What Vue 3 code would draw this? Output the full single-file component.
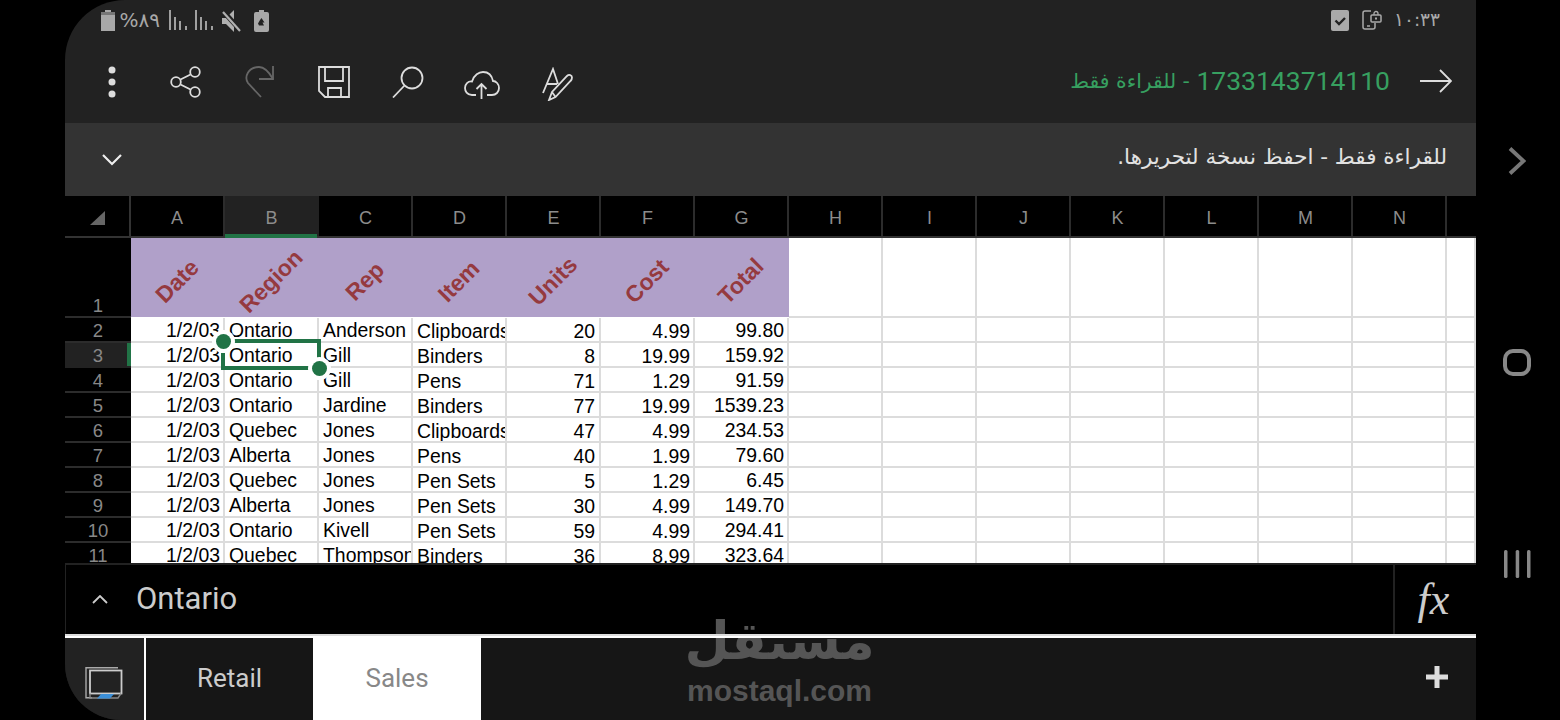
<script setup>
const cols = ['A','B','C','D','E','F','G','H','I','J','K','L','M','N']
const head = ['Date','Region','Rep','Item','Units','Cost','Total']
const rows = [
  ['1/2/03','Ontario','Anderson','Clipboards','20','4.99','99.80'],
  ['1/2/03','Ontario','Gill','Binders','8','19.99','159.92'],
  ['1/2/03','Ontario','Gill','Pens','71','1.29','91.59'],
  ['1/2/03','Ontario','Jardine','Binders','77','19.99','1539.23'],
  ['1/2/03','Quebec','Jones','Clipboards','47','4.99','234.53'],
  ['1/2/03','Alberta','Jones','Pens','40','1.99','79.60'],
  ['1/2/03','Quebec','Jones','Pen Sets','5','1.29','6.45'],
  ['1/2/03','Alberta','Jones','Pen Sets','30','4.99','149.70'],
  ['1/2/03','Ontario','Kivell','Pen Sets','59','4.99','294.41'],
  ['1/2/03','Quebec','Thompson','Binders','36','8.99','323.64'],
]
const empties = 8
</script>

<template>
  <div class="stage">
    <div class="screen">
      <header class="top">
        <div class="status">
          <div class="status-left">
            <svg class="st-batt" width="14" height="21" viewBox="0 0 14 21"><path d="M4 0h6v2h4v19H0V2h4z" fill="#a8a8a8"/><rect x="0" y="2" width="14" height="3" fill="#777"/></svg>
            <span class="pct" dir="rtl">٨٩%</span>
            <svg class="st-sig" width="18" height="20" viewBox="0 0 18 20"><path d="M0 0h2v20H0zM5 7h2v13H5zM10 11h2v9h-2zM16 16h2v4h-2z" fill="#a0a0a0"/></svg>
            <svg class="st-sig2" width="18" height="20" viewBox="0 0 18 20"><path d="M0 0h2v20H0zM5 7h2v13H5zM10 11h2v9h-2zM16 16h2v4h-2z" fill="#a0a0a0"/></svg>
            <svg class="st-mute" width="20" height="22" viewBox="0 0 20 22"><path d="M0 8h4l8-8v22l-8-8H0z" fill="#b0b0b0"/><path d="M1 1l18 20" stroke="#222" stroke-width="5"/><path d="M1 2l17 19" stroke="#b0b0b0" stroke-width="2.2"/></svg>
            <svg class="st-rec" width="15" height="22" viewBox="0 0 15 22"><path d="M5 0h5v2h3a2 2 0 0 1 2 2v16a2 2 0 0 1-2 2H2a2 2 0 0 1-2-2V4a2 2 0 0 1 2-2h3z" fill="#a8a8a8"/><path d="M7.500 8l3 4.500h-2l1.500 3H5l-1-2 2-3.500z" fill="#222"/></svg>
          </div>
          <div class="status-right">
            <svg class="st-check" width="18" height="21" viewBox="0 0 18 21"><rect width="18" height="21" rx="2" fill="#aaa"/><path d="M4.500 10.500l3.500 3.500 6-6" fill="none" stroke="#222" stroke-width="2.400"/></svg>
            <svg class="st-phone" width="20" height="20" viewBox="0 0 20 20"><path d="M9 1H3a2 2 0 0 0-2 2v14a2 2 0 0 0 2 2h8a2 2 0 0 0 2-2v-4" fill="none" stroke="#aaa" stroke-width="1.500"/><path d="M5 16h3" stroke="#aaa" stroke-width="1.500"/><rect x="9" y="5" width="10" height="7" rx="1" fill="none" stroke="#aaa" stroke-width="1.500"/><path d="M12 5V3.500a2 2 0 0 1 4 0V5" fill="none" stroke="#aaa" stroke-width="1.300"/><rect x="13" y="7.500" width="2" height="2" fill="#aaa"/></svg>
            <span class="time" dir="rtl">١٠:٣٣</span>
          </div>
        </div>
        <div class="toolbar">
          <div class="tools">
            <span class="tool"><svg width="8" height="32" viewBox="0 0 8 32"><circle cx="4" cy="4" r="3.500" fill="#ddd"/><circle cx="4" cy="16" r="3.500" fill="#ddd"/><circle cx="4" cy="28" r="3.500" fill="#ddd"/></svg></span>
            <span class="tool"><svg class="t-share" width="32" height="32" viewBox="0 0 32 32" fill="none" stroke="#ddd" stroke-width="1.800"><circle cx="6" cy="16" r="4.800"/><circle cx="25" cy="6" r="4.800"/><circle cx="25" cy="26" r="4.800"/><path d="M10.500 13.500L20.500 8.500M10.500 18.500L20.500 23.500"/></svg></span>
            <span class="tool"><svg width="30" height="32" viewBox="0 0 30 32" fill="none" stroke="#666" stroke-width="1.800"><path d="M16 31L3 17C-1 11 3 1 14 1C20 1 24 6 28 13"/><path d="M28 0V13H14"/></svg></span>
            <span class="tool"><svg class="t-save" width="32" height="32" viewBox="0 0 32 32" fill="none" stroke="#ddd" stroke-width="1.800"><path d="M1 1H31V31H7L1 25Z"/><path d="M7 1V15H25V1"/><path d="M10 31V22H23V31"/></svg></span>
            <span class="tool"><svg width="32" height="32" viewBox="0 0 32 32" fill="none" stroke="#ddd" stroke-width="1.800"><circle cx="20" cy="12" r="10.500"/><path d="M1 31.500L12.500 19.500"/></svg></span>
            <span class="tool"><svg class="t-cloud" width="36" height="28" viewBox="0 0 36 28" fill="none" stroke="#ddd" stroke-width="1.800"><path d="M12 24H8C3 24 1 20 1 17C1 13 4 10 8 10.500C10 4 15 1 19 1C25 1 28 5 29 10C32 10 35 13 35 17C35 21 32 24 28 24H23"/><path d="M17.500 28V13M12.500 18l5-5 5 5"/></svg></span>
            <span class="tool"><svg class="t-font" width="31" height="34" viewBox="0 0 31 34" fill="none" stroke="#ddd" stroke-width="1.800"><path d="M1 26L11 2L16 17M5 17H15"/><path d="M7 33L10 25L25 9C27 7 30 8 30 10.500C30 12 29.500 13 28.500 14L13.500 30ZM10 25L13.500 30"/></svg></span>
          </div>
          <div class="title-wrap">
            <span class="title" dir="rtl"><span class="title-num">1733143714110</span><span class="title-ar"> - للقراءة فقط</span></span>
            <svg width="32" height="24" viewBox="0 0 32 24" fill="none" stroke="#ddd" stroke-width="1.800"><path d="M0 12H31M20 1L31 12L20 23"/></svg>
          </div>
        </div>
      </header>

      <div class="notice">
        <svg width="20" height="12" viewBox="0 0 20 12" fill="none" stroke="#eee" stroke-width="2.200"><path d="M1 1l9 9 9-9"/></svg>
        <span class="notice-text" dir="rtl">للقراءة فقط - احفظ نسخة لتحريرها.</span>
      </div>

      <div class="col-head grid">
        <div class="corner"><svg width="15" height="14" viewBox="0 0 15 14"><path d="M15 0V14H0Z" fill="#666"/></svg></div>
        <div v-for="c in cols" :key="c" class="ch" :class="{ on: c === 'B' }">{{ c }}</div>
        <div class="ch last"></div>
      </div>

      <div class="sheet">
        <div class="grid r1">
          <div class="rh rh1">1</div>
          <div v-for="h in head" :key="h" class="hc"><span class="rot">{{ h }}</span></div>
          <div v-for="n in empties" :key="n" class="c"></div>
        </div>
        <div v-for="(r, i) in rows" :key="i" class="grid rw">
          <div class="rh" :class="{ on: i === 1 }">{{ i + 2 }}</div>
          <div class="c right">{{ r[0] }}</div>
          <div class="c">{{ r[1] }}</div>
          <div class="c">{{ r[2] }}</div>
          <div class="c low">{{ r[3] }}</div>
          <div class="c right low pad">{{ r[4] }}</div>
          <div class="c right low">{{ r[5] }}</div>
          <div class="c right">{{ r[6] }}</div>
          <div v-for="n in empties" :key="n" class="c"></div>
        </div>
        <div class="sel"></div>
        <div class="handle h-a"></div>
        <div class="handle h-b"></div>
      </div>

      <div class="formula">
        <svg class="f-chev" width="16" height="9" viewBox="0 0 16 9" fill="none" stroke="#ccc" stroke-width="1.800"><path d="M1 8l7-7 7 7"/></svg>
        <span class="f-val">Ontario</span>
        <div class="fx"><span>fx</span></div>
      </div>
      <div class="rule"></div>

      <div class="tabs">
        <div class="tab-ico">
          <svg width="38" height="32" viewBox="0 0 38 32" fill="none"><path d="M33 .7H1v30h6" stroke="#aaa" stroke-width="1.400"/><rect x="5" y="3.500" width="31.500" height="23" stroke="#ccc" stroke-width="1.800"/><path d="M5 26.500v4.500h28l3-4.500" stroke="#888" stroke-width="1.400"/><path d="M16 27h13l-4 4.500H12z" fill="#3b8fd8"/></svg>
        </div>
        <div class="tab">Retail</div>
        <div class="tab active">Sales</div>
        <div class="tab-rest">
          <svg width="22" height="22" viewBox="0 0 22 22"><path d="M8.500 0h5v8.500H22v5h-8.500V22h-5v-8.500H0v-5h8.500z" fill="#ddd"/></svg>
        </div>
      </div>

      <div class="mark">
        <span class="mark-ar" dir="rtl">مستقل</span>
        <span class="mark-en">mostaql.com</span>
      </div>
    </div>

    <nav class="nav">
      <svg width="18" height="28" viewBox="0 0 18 28" fill="none" stroke="#777" stroke-width="3.800"><path d="M2 1.500L15.500 14L2 26.500"/></svg>
      <div class="nav-home"></div>
      <svg width="27" height="28" viewBox="0 0 27 28"><rect x="0" width="3.500" height="28" rx="1.500" fill="#888"/><rect x="11.700" width="3.500" height="28" rx="1.500" fill="#888"/><rect x="23" width="3.500" height="28" rx="1.500" fill="#888"/></svg>
    </nav>
  </div>
</template>

<style>
html, body { margin: 0; background: #000; overflow: hidden; }
</style>

<style scoped>
.stage { width: 1560px; height: 720px; display: flex; background: #000; padding-left: 65px; box-sizing: border-box; }
.screen { position: relative; width: 1411px; height: 720px; flex: none; overflow: hidden; border-radius: 60px 0 0 56px; display: flex; flex-direction: column; background: #000; }

.top { height: 123px; background: #222; flex: none; }
.status { height: 40px; display: flex; justify-content: space-between; align-items: flex-start; padding: 10px 36px 0 36px; box-sizing: border-box; }
.status-left, .status-right { display: flex; align-items: flex-start; }
.pct { font: 20px/21px "DejaVu Sans", sans-serif; color: #a8a8a8; margin-left: 6px; width: 39px; white-space: nowrap; }
.st-sig { margin-left: 9px; }
.st-sig2 { margin-left: 8px; }
.st-mute { margin-left: 9px; }
.st-rec { margin-left: 12px; }
.st-check { margin-right: 1px; }
.st-phone { margin-left: 12px; }
.time { font: 18.500px/20px "DejaVu Sans", sans-serif; color: #aaa; margin-left: 12px; white-space: nowrap; }

.toolbar { height: 83px; display: flex; justify-content: space-between; align-items: flex-start; padding: 0 24px 0 10px; }
.tools { display: flex; padding-top: 25px; }
.tool { width: 74px; height: 34px; display: flex; align-items: center; justify-content: center; }
.t-share { margin-left: -1px; }
.t-save { margin-left: -1px; }
.t-cloud { margin-top: 5px; }
.t-font { margin-top: 3px; margin-left: 3px; }
.title-wrap { display: flex; align-items: center; height: 83px; margin-top: -1px; }
.title { white-space: nowrap; margin-right: 30px; display: flex; align-items: center; }
.title-num { font: 26.500px/32px Roboto, sans-serif; color: #37a060; }
.title-ar { font: 20.300px/32px "DejaVu Sans", sans-serif; color: #37a060; white-space: pre; }

.notice { height: 73px; flex: none; background: #333; display: flex; align-items: center; justify-content: space-between; padding: 0 29px 0 37px; box-sizing: border-box; }
.notice-text { font: 21.500px/30px "DejaVu Sans", sans-serif; color: #e2e2e2; margin-top: -6px; white-space: nowrap; }

.grid { display: grid; grid-template-columns: 65px 95px repeat(13, 94px) 1fr; }
.col-head { height: 42px; flex: none; background: #000; box-sizing: border-box; border-bottom: 2px solid #333; }
.corner { display: flex; align-items: center; justify-content: flex-end; padding: 3px 24px 0 0; box-sizing: border-box; border-right: 2px solid #333; height: 40px; margin-right: -1px; }
.ch { height: 40px; text-align: center; font: 18px/44px "Liberation Sans", sans-serif; color: #8c8c8c; border-right: 2px solid #2c2c2c; box-sizing: border-box; position: relative; padding-left: 1px; }
.ch.on { background: #222; border-right-color: #222; }
.ch.on::after { content: ""; position: absolute; left: 0; right: 0; bottom: -2px; height: 4px; background: #217346; }
.ch.last { border-right: 0; }

.sheet { position: relative; height: 325px; flex: none; overflow: hidden; background: #fff; }
.r1 { height: 80px; }
.rw { height: 25px; }
.rh { background: #000; color: #888; font: 18.500px/26px "Liberation Sans", sans-serif; text-align: center; box-sizing: border-box; border-bottom: 2px solid #2c2c2c; position: relative; height: 25px; margin-right: -1px; z-index: 1; }
.rh1 { height: 80px; line-height: 136px; }
.rh.on { background: #222; border-bottom-color: #222; }
.rh.on::after { content: ""; position: absolute; right: 0; top: 0; bottom: 0; width: 4px; background: #217346; }
.hc { background: #b0a0c9; height: 79px; display: flex; align-items: center; justify-content: center; padding-right: 2px; box-sizing: border-box; }
.rot { display: block; font: bold 23px/26px "Liberation Sans", sans-serif; color: #953a3f; transform: rotate(-45deg); white-space: nowrap; margin-top: 6px; }
.c { box-sizing: border-box; height: 100%; border-right: 2px solid #dcdcdc; border-bottom: 2px solid #dcdcdc; font: 19.400px/25px "Liberation Sans", sans-serif; color: #000; padding: 0 0 0 4px; white-space: nowrap; overflow: hidden; }
.right { text-align: right; padding: 0 3px 0 0; }
.pad { padding-right: 4px; }
.low { line-height: 27px; }
.sel { position: absolute; left: 156px; top: 101px; width: 100px; height: 31px; box-sizing: border-box; border: 4px solid #217346; z-index: 2; }
.handle { position: absolute; width: 15px; height: 15px; border-radius: 50%; background: #217346; box-shadow: 0 0 0 4px #fff; z-index: 2; }
.h-a { left: 150.500px; top: 95.500px; }
.h-b { left: 246.500px; top: 122.500px; }

.formula { height: 71px; flex: none; box-sizing: border-box; background: #000; border-top: 2px solid #222; border-left: 1px solid #222; display: flex; align-items: center; padding-left: 26px; position: relative; }
.f-val { font: 31px/40px Roboto, sans-serif; color: #ccc; margin-left: 28px; margin-top: -1px; }
.fx { margin-left: auto; width: 83px; height: 100%; border-left: 2px solid #222; display: flex; align-items: center; justify-content: center; box-sizing: border-box; padding-right: 4px; }
.fx span { font: italic 44px/40px "Liberation Serif", serif; color: #ccc; }
.rule { height: 4px; flex: none; background: linear-gradient(#ddd 0 40%, #fff 40% 100%); position: relative; z-index: 3; }

.tabs { flex: 1; display: flex; background: #161616; }
.tab-ico { flex: none; background: #222; border-right: 2px solid #fff; display: flex; align-items: center; justify-content: center; width: 79px; box-sizing: content-box; }
.tab-ico svg { margin-top: 8px; margin-right: 1px; }
.tab { width: 167px; flex: none; text-align: center; font: 26px/80px Roboto, sans-serif; color: #ccc; }
.tab.active { width: 168px; background: #fff; color: #888; }
.tab-rest { flex: 1; display: flex; align-items: center; justify-content: flex-end; padding-right: 28px; padding-bottom: 5px; }

.mark { position: absolute; left: 621px; top: 606px; width: 187px; height: 104px; display: flex; flex-direction: column; align-items: center; z-index: 2; }
.mark-ar { font: bold 52px/70px "DejaVu Sans", sans-serif; color: #555; white-space: nowrap; }
.mark-en { font: bold 30px/30px "Liberation Sans", sans-serif; color: #555; white-space: nowrap; }

.nav { flex: 1; display: flex; flex-direction: column; align-items: center; gap: 174px; padding: 147px 2px 0 0; box-sizing: border-box; height: 720px; }
.nav-home { width: 28px; height: 27px; box-sizing: border-box; border: 4px solid #888; border-radius: 10px; }
</style>
